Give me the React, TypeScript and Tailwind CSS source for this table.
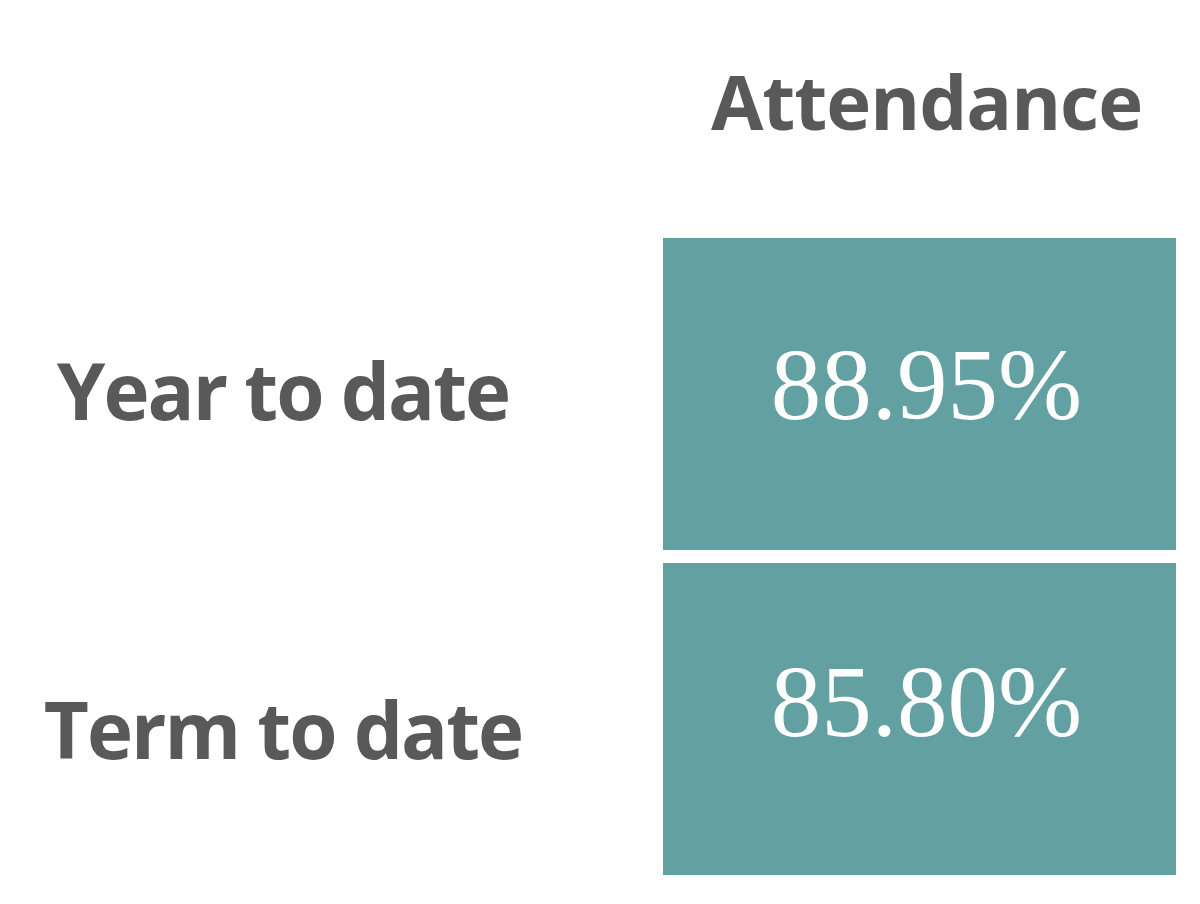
import React from "react";

const labelFont = { fontFamily: '"Open Sans", "Noto Sans", sans-serif' };

export default function App() {
  return (
    <div className="w-[1200px] h-[904px] bg-white overflow-hidden flex flex-col text-[#595959]" style={labelFont}>
      <div className="flex h-[238px]">
        <div className="w-[663px]" />
        <div className="w-[513px] pt-[63px] pl-[14px] text-center text-[76px] font-bold leading-none tracking-[-1px]">
          Attendance
        </div>
      </div>
      <div className="flex h-[312px]">
        <div className="w-[566px] flex items-center justify-center pb-[8px] text-[78px] font-bold leading-none tracking-[-2px]">
          Year to date
        </div>
        <div className="ml-[97px] w-[513px] bg-[#63a0a1] flex items-center justify-center pb-[18px] pl-[14px] text-white text-[101px] leading-none font-['Liberation_Serif',serif]">
          88.95%
        </div>
      </div>
      <div className="h-[13px]" />
      <div className="flex h-[312px]">
        <div className="w-[566px] flex items-center justify-center pt-[20px] text-[78px] font-bold leading-none tracking-[-2px]">
          Term to date
        </div>
        <div className="ml-[97px] w-[513px] bg-[#63a0a1] flex items-center justify-center pb-[34px] pl-[14px] text-white text-[101px] leading-none font-['Liberation_Serif',serif]">
          85.80%
        </div>
      </div>
    </div>
  );
}
